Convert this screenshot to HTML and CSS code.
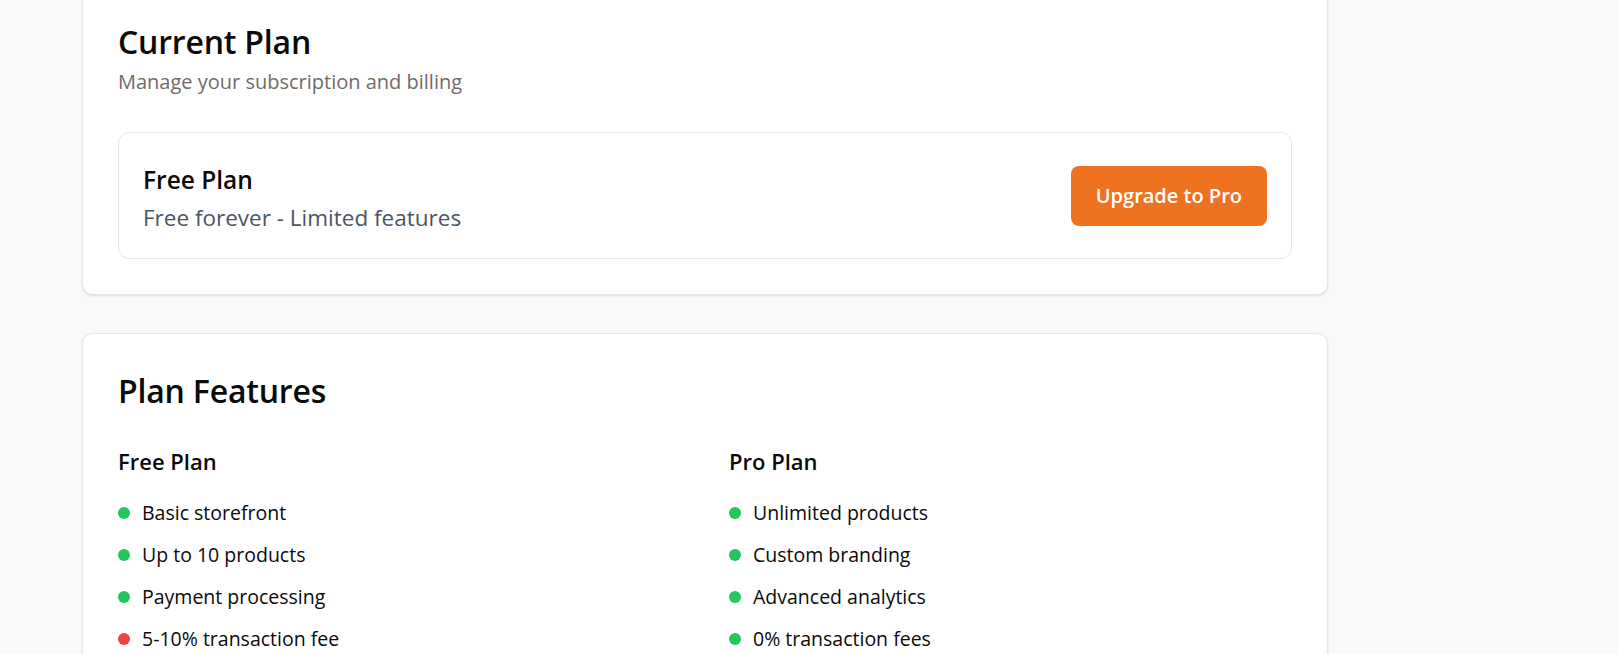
FILE: index.html
```html
<!DOCTYPE html>
<html lang="en">
<head>
<meta charset="utf-8">
<title>Billing</title>
<link rel="stylesheet" href="styles.css">
</head>
<body>
<main class="page">
  <section class="card">
    <h1 class="card-title">Current Plan</h1>
    <p class="card-subtitle">Manage your subscription and billing</p>
    <div class="plan-box">
      <div class="plan-info">
        <h2 class="plan-name">Free Plan</h2>
        <p class="plan-desc">Free forever - Limited features</p>
      </div>
      <button class="btn-upgrade" type="button">Upgrade to Pro</button>
    </div>
  </section>

  <section class="card">
    <h1 class="card-title">Plan Features</h1>
    <div class="features-grid">
      <div class="feature-col">
        <h3 class="col-title">Free Plan</h3>
        <ul class="feature-list">
          <li class="feature"><span class="dot dot-green"></span>Basic storefront</li>
          <li class="feature"><span class="dot dot-green"></span>Up to 10 products</li>
          <li class="feature"><span class="dot dot-green"></span>Payment processing</li>
          <li class="feature"><span class="dot dot-red"></span>5-10% transaction fee</li>
        </ul>
      </div>
      <div class="feature-col">
        <h3 class="col-title">Pro Plan</h3>
        <ul class="feature-list">
          <li class="feature"><span class="dot dot-green"></span>Unlimited products</li>
          <li class="feature"><span class="dot dot-green"></span>Custom branding</li>
          <li class="feature"><span class="dot dot-green"></span>Advanced analytics</li>
          <li class="feature"><span class="dot dot-green"></span>0% transaction fees</li>
        </ul>
      </div>
    </div>
  </section>
</main>
</body>
</html>
```

FILE: styles.css
```css
* { box-sizing: border-box; }

html, body {
  margin: 0;
  padding: 0;
  background: #f8f9fa;
  font-family: "Open Sans", "Noto Sans", Arial, sans-serif;
  color: #0b0b0b;
}

.page {
  width: 1246px;
  margin: -16px 0 0 82px;
  display: flex;
  flex-direction: column;
  gap: 38px;
}

.card {
  background: #ffffff;
  border: 1px solid #e5e7eb;
  border-radius: 11px;
  box-shadow: 0 1px 3px rgba(0, 0, 0, 0.08), 0 1px 2px rgba(0, 0, 0, 0.04);
  padding: 35px;
}

.card-current {
  padding-bottom: 36px;
}

.card-title {
  margin: 0;
  font-size: 32px;
  font-weight: 600;
  line-height: 44px;
  letter-spacing: -0.2px;
  color: #0a0a0a;
}

.card-subtitle {
  margin: 4px 0 0;
  font-size: 20px;
  line-height: 28px;
  color: #716b68;
}

.plan-box {
  margin-top: 36px;
  border: 1px solid #e5e7eb;
  border-radius: 11px;
  padding: 24px;
  display: flex;
  align-items: center;
  justify-content: space-between;
}

.plan-info {
  padding-top: 6px;
}

.plan-name {
  margin: 0;
  font-size: 24.5px;
  font-weight: 600;
  line-height: 34px;
  color: #0a0a0a;
}

.plan-desc {
  margin: 5px 0 0;
  font-size: 22.5px;
  line-height: 32px;
  color: #4b5563;
}

.btn-upgrade {
  border: 0;
  border-radius: 8px;
  background: #ef7220;
  color: #ffffff;
  font-family: inherit;
  font-size: 20px;
  font-weight: 600;
  height: 60px;
  padding: 0 25px;
  cursor: pointer;
}

.features-grid {
  margin-top: 33px;
  display: grid;
  grid-template-columns: 1fr 1fr;
  gap: 48px;
}

.col-title {
  margin: 0;
  font-size: 22px;
  font-weight: 600;
  line-height: 30px;
  color: #0a0a0a;
}

.feature-list {
  list-style: none;
  margin: 22px 0 0;
  padding: 0;
  display: flex;
  flex-direction: column;
  gap: 12px;
}

.feature {
  display: flex;
  align-items: center;
  gap: 12px;
  font-size: 19.5px;
  line-height: 30px;
  color: #0a0a0a;
}

.dot {
  width: 12px;
  height: 12px;
  border-radius: 50%;
  flex: none;
}

.dot-green { background: #22c55e; }
.dot-red { background: #ef4444; }
```
